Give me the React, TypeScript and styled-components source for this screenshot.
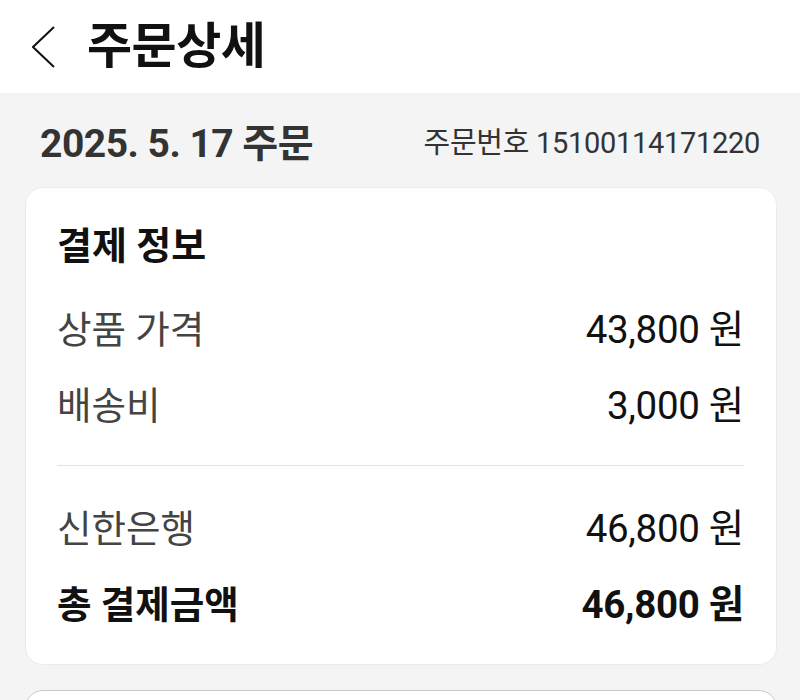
import * as React from 'react';
import styled, { createGlobalStyle } from 'styled-components';

const GlobalStyle = createGlobalStyle`
    html, body {
        margin: 0;
        padding: 0;
        background: #f4f4f4;
    }
    body {
        font-family: Roboto, "Noto Sans CJK KR", sans-serif;
        color: #111;
    }
`;

const Page = styled.div`
    width: 800px;
    height: 700px;
    overflow: hidden;
    background: #f4f4f4;
`;

const TopBar = styled.header`
    height: 93px;
    background: #fff;
    display: flex;
    align-items: center;
    padding-left: 32px;
    box-sizing: border-box;
`;

const BackButton = styled.button`
    width: 24px;
    height: 44px;
    border: 0;
    padding: 0;
    background: none;
    display: flex;
    align-items: center;
    justify-content: center;
    margin-right: 31px;
`;

const Title = styled.h1`
    margin: 0;
    font-size: 49px;
    font-weight: 700;
    letter-spacing: -0.5px;
    color: #111;
    line-height: 1;
`;

const OrderHead = styled.div`
    height: 94px;
    display: flex;
    align-items: center;
    justify-content: space-between;
    padding: 0 40px;
`;

const OrderDate = styled.div`
    font-size: 39px;
    font-weight: 700;
    color: #333;
    letter-spacing: -0.5px;
`;

const OrderNo = styled.div`
    font-size: 29px;
    color: #333;
    letter-spacing: -0.3px;
`;

const Card = styled.section<{ $open?: boolean }>`
    margin: 0 23px 25px 25px;
    background: #fff;
    border: 1px solid ${p => (p.$open ? '#c9c9c9' : '#ebebeb')};
    border-radius: 18px;
    padding: ${p => (p.$open ? '0' : '29px 32px 25px 31px')};
    height: ${p => (p.$open ? '60px' : 'auto')};
`;

const CardTitle = styled.h2`
    margin: 0 0 21px;
    height: 50px;
    display: flex;
    align-items: center;
    font-size: 38px;
    font-weight: 700;
    color: #111;
`;

const Row = styled.div<{ $strong?: boolean }>`
    height: 76px;
    display: flex;
    align-items: center;
    justify-content: space-between;
    font-size: 37.5px;
    font-weight: ${p => (p.$strong ? 700 : 400)};
`;

const Label = styled.span<{ $strong?: boolean }>`
    color: ${p => (p.$strong ? '#111' : '#444')};
`;

const Amount = styled.span`
    color: #111;
    font-size: 38.5px;
    letter-spacing: -0.3px;
`;

const Divider = styled.hr`
    border: 0;
    border-top: 1px solid #e2e2e2;
    margin: 25px 0 21px;
`;

const rows = [
    { label: '상품 가격', value: '43,800' },
    { label: '배송비', value: '3,000' },
];

export default function App() {
    return (
        <Page>
            <GlobalStyle />
            <TopBar>
                <BackButton aria-label="뒤로">
                    <svg width="24" height="42" viewBox="0 0 24 42">
                        <polyline points="22,1 1,21 22,41" fill="none" stroke="#111" strokeWidth="2" />
                    </svg>
                </BackButton>
                <Title>주문상세</Title>
            </TopBar>
            <OrderHead>
                <OrderDate>2025. 5. 17 주문</OrderDate>
                <OrderNo>주문번호 15100114171220</OrderNo>
            </OrderHead>
            <Card>
                <CardTitle>결제 정보</CardTitle>
                {rows.map(r => (
                    <Row key={r.label}>
                        <Label>{r.label}</Label>
                        <Amount>{r.value} 원</Amount>
                    </Row>
                ))}
                <Divider />
                <Row>
                    <Label>신한은행</Label>
                    <Amount>46,800 원</Amount>
                </Row>
                <Row $strong>
                    <Label $strong>총 결제금액</Label>
                    <Amount>46,800 원</Amount>
                </Row>
            </Card>
            <Card $open />
        </Page>
    );
}
